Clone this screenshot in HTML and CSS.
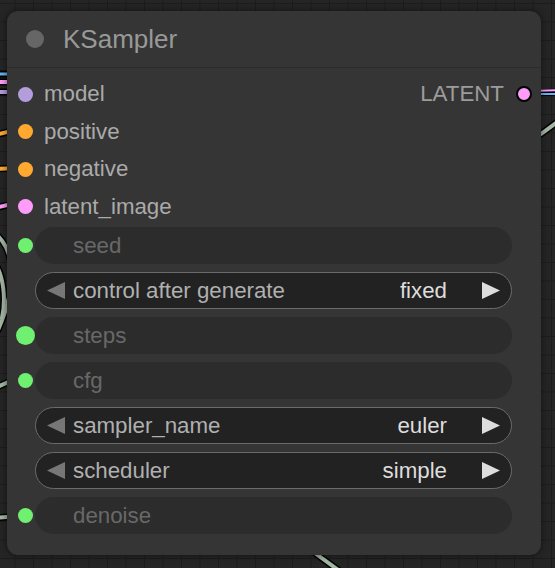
FILE: index.html
```html
<!DOCTYPE html>
<html>
<head>
<meta charset="utf-8">
<link rel="stylesheet" href="styles.css">
</head>
<body>
<div class="canvas">
  <svg class="wires" width="555" height="568" viewBox="0 0 555 568">
    <g fill="none" stroke-linecap="round">
      <g stroke="#000" stroke-width="7">
        <path d="M-5 74 L20 74"/>
        <path d="M-5 82 L20 82"/>
        <path d="M-5 92 L20 92"/>
        <path d="M-5 135 L20 129"/>
        <path d="M-5 169 L20 168"/>
        <path d="M-5 208 L20 202"/>
        <path d="M-2 236 C12 250 20 280 -2 330"/>
        <path d="M-6 262 C4 275 6 300 2 318"/>
        <path d="M-5 388 L20 377"/>
        <path d="M-5 518 L20 516"/>
        <path d="M530 93 L560 92"/>
        <path d="M530 142 L560 120"/>
        <path d="M308 548 L345 575"/>
      </g>
      <path d="M-5 74 L20 74" stroke="#64b5f6" stroke-width="3"/>
      <path d="M-5 82 L20 82" stroke="#ff9cf9" stroke-width="4"/>
      <path d="M-5 92 L20 92" stroke="#b39ddb" stroke-width="4"/>
      <path d="M-5 135 L20 129" stroke="#ffa931" stroke-width="4"/>
      <path d="M-5 169 L20 168" stroke="#ffa931" stroke-width="4"/>
      <path d="M-5 208 L20 202" stroke="#ff9cf9" stroke-width="4"/>
      <g stroke="#a3b5a3" stroke-width="4">
        <path d="M-2 236 C12 250 20 280 -2 330"/>
        <path d="M-6 262 C4 275 6 300 2 318"/>
        <path d="M-5 388 L20 377"/>
        <path d="M-5 518 L20 516"/>
        <path d="M530 142 L560 120"/>
        <path d="M308 548 L345 575"/>
      </g>
      <path d="M530 91 L560 90" stroke="#ff9cf9" stroke-width="2"/>
      <path d="M530 94 L560 94" stroke="#64b5f6" stroke-width="2"/>
    </g>
  </svg>

  <div class="node">
    <div class="node-title">
      <span class="title-dot"></span>
      <span class="title-text">KSampler</span>
    </div>
    <div class="node-body">
      <div class="slot-row">
        <div class="slot"><span class="dot dot-model"></span><span class="slot-label">model</span></div>
        <div class="slot slot-out"><span class="slot-label">LATENT</span><span class="dot dot-out"></span></div>
      </div>
      <div class="slot-row">
        <div class="slot"><span class="dot dot-cond"></span><span class="slot-label">positive</span></div>
      </div>
      <div class="slot-row">
        <div class="slot"><span class="dot dot-cond"></span><span class="slot-label">negative</span></div>
      </div>
      <div class="slot-row">
        <div class="slot"><span class="dot dot-latent"></span><span class="slot-label">latent_image</span></div>
      </div>

      <div class="widgets">
        <div class="widget-row">
          <span class="wslot"><span class="dot dot-green"></span></span>
          <div class="widget inactive"><span class="wlabel">seed</span></div>
        </div>
        <div class="widget-row">
          <span class="wslot"></span>
          <div class="widget combo">
            <svg class="arrow arrow-left" width="18" height="17" viewBox="0 0 18 17"><polygon points="18,0 18,17 0,8.5"/></svg>
            <span class="wlabel">control after generate</span>
            <span class="wvalue">fixed</span>
            <svg class="arrow arrow-right" width="18" height="17" viewBox="0 0 18 17"><polygon points="0,0 0,17 18,8.5"/></svg>
          </div>
        </div>
        <div class="widget-row">
          <span class="wslot"><span class="dot dot-green dot-big"></span></span>
          <div class="widget inactive"><span class="wlabel">steps</span></div>
        </div>
        <div class="widget-row">
          <span class="wslot"><span class="dot dot-green"></span></span>
          <div class="widget inactive"><span class="wlabel">cfg</span></div>
        </div>
        <div class="widget-row">
          <span class="wslot"></span>
          <div class="widget combo">
            <svg class="arrow arrow-left" width="18" height="17" viewBox="0 0 18 17"><polygon points="18,0 18,17 0,8.5"/></svg>
            <span class="wlabel">sampler_name</span>
            <span class="wvalue">euler</span>
            <svg class="arrow arrow-right" width="18" height="17" viewBox="0 0 18 17"><polygon points="0,0 0,17 18,8.5"/></svg>
          </div>
        </div>
        <div class="widget-row">
          <span class="wslot"></span>
          <div class="widget combo">
            <svg class="arrow arrow-left" width="18" height="17" viewBox="0 0 18 17"><polygon points="18,0 18,17 0,8.5"/></svg>
            <span class="wlabel">scheduler</span>
            <span class="wvalue">simple</span>
            <svg class="arrow arrow-right" width="18" height="17" viewBox="0 0 18 17"><polygon points="0,0 0,17 18,8.5"/></svg>
          </div>
        </div>
        <div class="widget-row">
          <span class="wslot"><span class="dot dot-green"></span></span>
          <div class="widget inactive"><span class="wlabel">denoise</span></div>
        </div>
      </div>
    </div>
  </div>
</div>
</body>
</html>
```

FILE: styles.css
```css
html, body {
  margin: 0;
  padding: 0;
  background: #242424;
}

body {
  font-family: "Liberation Sans", Arial, sans-serif;
}

.canvas {
  position: relative;
  width: 555px;
  height: 568px;
  overflow: hidden;
  background-color: #252525;
  background-image:
    linear-gradient(#1c1c1c 1px, transparent 1px),
    linear-gradient(90deg, #1c1c1c 1px, transparent 1px);
  background-size: 18.5px 18.5px;
  background-position: 14.5px 3px;
}

.wires {
  position: absolute;
  left: 0;
  top: 0;
}

.node {
  position: absolute;
  left: 7px;
  top: 11px;
  width: 534px;
  height: 544px;
  background: #353535;
  border-radius: 11px;
  box-shadow: 0 0 7px rgba(0, 0, 0, 0.55);
  display: flex;
  flex-direction: column;
}

.node-title {
  height: 56px;
  display: flex;
  align-items: center;
  gap: 19px;
  padding-left: 19px;
  border-bottom: 1px solid #2c2c2c;
}

.title-dot {
  width: 18px;
  height: 18px;
  border-radius: 50%;
  background: #666;
}

.title-text {
  font-size: 26px;
  color: #999;
}

.node-body {
  padding: 7.5px 9.5px 0 10.5px;
}

.slot-row {
  height: 37.5px;
  display: flex;
  align-items: center;
  justify-content: space-between;
}

.slot {
  display: flex;
  align-items: center;
  gap: 11.5px;
}

.slot-label {
  font-size: 22.3px;
  color: #aaa;
}

.slot-out .slot-label {
  color: #9c9c9c;
}

.dot {
  display: block;
  width: 15px;
  height: 15px;
  border-radius: 50%;
  box-sizing: border-box;
  flex: none;
}

.dot-model { background: #b39ddb; }
.dot-cond { background: #ffa931; }
.dot-latent { background: #ff9cf9; }
.dot-green { background: #70f070; }

.dot-big {
  width: 19px;
  height: 19px;
}

.dot-out {
  width: 16px;
  height: 16px;
  background: #ff9cf9;
  border: 2px solid #000;
}

.widgets {
  margin-top: 1.5px;
  display: flex;
  flex-direction: column;
  gap: 8px;
}

.widget-row {
  height: 37px;
  display: flex;
  align-items: center;
  gap: 2.5px;
}

.wslot {
  width: 15px;
  height: 37px;
  display: flex;
  align-items: center;
  justify-content: center;
  flex: none;
}

.widget {
  flex: none;
  width: 477px;
  height: 37px;
  box-sizing: border-box;
  border-radius: 18.5px;
  display: flex;
  align-items: center;
  font-size: 22.3px;
}

.inactive {
  background: #2c2c2c;
  padding-left: 38px;
  color: #686868;
}

.combo {
  background: #222;
  border: 1px solid #6b6b6b;
  padding: 0 11px;
}

.arrow {
  display: block;
  flex: none;
}

.arrow-left {
  fill: #777;
}

.arrow-right {
  fill: #ddd;
  margin-left: 35px;
}

.combo .wlabel {
  margin-left: 8px;
  color: #b0b0b0;
}

.wvalue {
  margin-left: auto;
  color: #ddd;
}
```
